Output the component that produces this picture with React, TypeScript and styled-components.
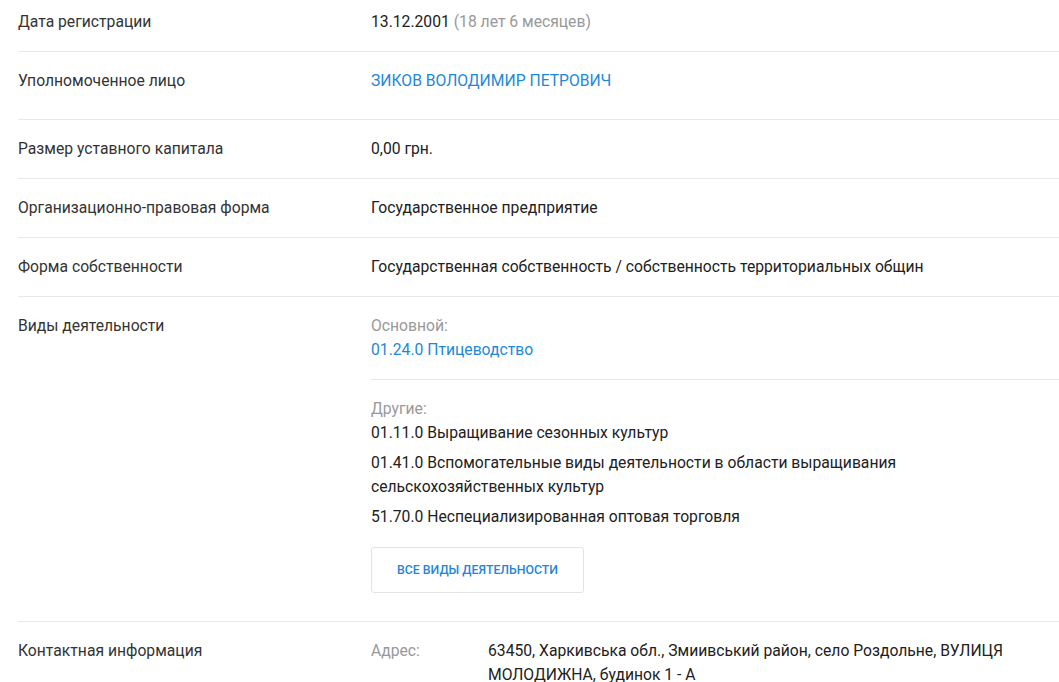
import React from "react";
import styled, { createGlobalStyle } from "styled-components";

const GlobalStyle = createGlobalStyle`
  html, body {
    margin: 0;
    padding: 0;
    background: #fff;
    overflow: hidden;
  }
  body {
    font-family: Roboto, "Noto Sans", Arial, sans-serif;
    font-size: 15.7px;
    color: #212121;
  }
`;

const others = [
  "01.11.0 Выращивание сезонных культур",
  "01.41.0 Вспомогательные виды деятельности в области выращивания сельскохозяйственных культур",
  "51.70.0 Неспециализированная оптовая торговля",
];

const App: React.FC = () => {
  return (
    <>
      <GlobalStyle />
      <Page>
        <Row>
          <Label>Дата регистрации</Label>
          <Value>
            13.12.2001 <Muted>(18 лет 6 месяцев)</Muted>
          </Value>
        </Row>
        <Row extra={9}>
          <Label>Уполномоченное лицо</Label>
          <Value>
            <Link>ЗИКОВ ВОЛОДИМИР ПЕТРОВИЧ</Link>
          </Value>
        </Row>
        <Row>
          <Label>Размер уставного капитала</Label>
          <Value>0,00 грн.</Value>
        </Row>
        <Row>
          <Label>Организационно-правовая форма</Label>
          <Value>Государственное предприятие</Value>
        </Row>
        <Row>
          <Label>Форма собственности</Label>
          <Value>
            Государственная собственность / собственность территориальных общин
          </Value>
        </Row>
        <Row flush>
          <Label>Виды деятельности</Label>
          <Value>
            <Group>
              <Muted>Основной:</Muted>
              <div>
                <Link>01.24.0 Птицеводство</Link>
              </div>
            </Group>
            <Group last>
              <Muted>Другие:</Muted>
              <ActivityList>
                {others.map((item) => (
                  <Activity key={item}>{item}</Activity>
                ))}
              </ActivityList>
              <OutlineButton>Все виды деятельности</OutlineButton>
            </Group>
          </Value>
        </Row>
        <Row last>
          <Label>Контактная информация</Label>
          <Value>
            <Contact>
              <Muted>Адрес:</Muted>
              <span>
                63450, Харкивська обл., Змиивський район, село Роздольне, ВУЛИЦЯ
                МОЛОДИЖНА, будинок 1 - А
              </span>
            </Contact>
          </Value>
        </Row>
      </Page>
    </>
  );
};

export default App;

const Page = styled.div`
  margin-top: -7px;
  padding-left: 18px;
`;

const Row = styled.div<{ extra?: number; flush?: boolean; last?: boolean }>`
  display: grid;
  grid-template-columns: 353px 1fr;
  padding: 17px 0 ${({ extra, flush }) => (flush ? 0 : 17 + (extra || 0))}px;
  border-bottom: ${({ last }) => (last ? "none" : "1px solid #e8e8e8")};
  line-height: 24px;
`;

const Label = styled.div`
  color: #333;
`;

const Value = styled.div`
  color: #212121;
  padding-right: 30px;
`;

const Muted = styled.span`
  color: #999;
`;

const Link = styled.a`
  color: #1e88d8;
  text-decoration: none;
  cursor: pointer;
`;

const Group = styled.div<{ last?: boolean }>`
  display: flex;
  flex-direction: column;
  margin-right: -30px;
  padding: ${({ last }) => (last ? "17px 0 28px" : "0 0 17px")};
  border-bottom: ${({ last }) => (last ? "none" : "1px solid #e8e8e8")};
`;

const ActivityList = styled.div`
  display: flex;
  flex-direction: column;
  gap: 6px;
  max-width: 560px;
`;

const Activity = styled.div`
  color: #212121;
`;

const OutlineButton = styled.button`
  align-self: flex-start;
  margin-top: 18px;
  width: 213px;
  height: 46px;
  background: #fff;
  border: 1px solid #e3e3e3;
  border-radius: 3px;
  color: #1e88d8;
  font-family: Roboto, Arial, sans-serif;
  font-size: 12.3px;
  font-weight: 500;
  text-transform: uppercase;
  cursor: pointer;
`;

const Contact = styled.div`
  display: grid;
  grid-template-columns: 117px 1fr;
`;
